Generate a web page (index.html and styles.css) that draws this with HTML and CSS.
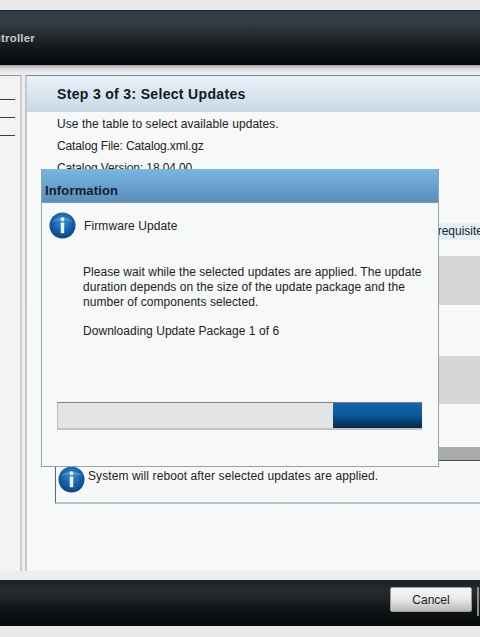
FILE: index.html
```html
<!DOCTYPE html>
<html lang="en">
<head>
<meta charset="utf-8">
<title>Select Updates</title>
<link rel="stylesheet" href="styles.css">
</head>
<body>
<svg class="defs" width="0" height="0" aria-hidden="true">
  <defs>
    <radialGradient id="orb" cx="50%" cy="35%" r="70%">
      <stop offset="0" stop-color="#3f8fd0"/>
      <stop offset="0.55" stop-color="#155fa8"/>
      <stop offset="1" stop-color="#0a3c78"/>
    </radialGradient>
    <symbol id="info" viewBox="0 0 28 28">
      <circle cx="14" cy="14" r="13.5" fill="url(#orb)"/>
      <path d="M3 11C7 4 21 4 25 11C20 8 8 8 3 11Z" fill="#6fb0e2" opacity=".45"/>
      <circle cx="14" cy="7.5" r="2" fill="#e6f1fa"/>
      <rect x="12.2" y="11" width="3.6" height="11" rx=".6" fill="#e6f1fa"/>
    </symbol>
  </defs>
</svg>
<div class="page">
  <header class="topbar"><div class="brand"><span>Controller</span></div></header>
  <div class="workspace">
    <aside class="sidebar">
      <div class="side-row"></div>
      <div class="side-row"></div>
      <div class="side-row"></div>
    </aside>
    <main class="panel">
      <h1 class="panel-title">Step 3 of 3: Select Updates</h1>
      <div class="intro">
        <p>Use the table to select available updates.</p>
        <p class="tight">Catalog File: Catalog.xml.gz</p>
        <p class="tight">Catalog Version: 18.04.00</p>
      </div>
      <div class="table">
        <div class="thead"><span>Prerequisite</span></div>
        <div class="row gray r1"></div>
        <div class="row r2"></div>
        <div class="row gray r3"></div>
        <div class="row r4"></div>
        <div class="scroll"></div>
      </div>
      <div class="notice">
        <svg class="notice-icon"><use href="#info"/></svg>
        <span>System will reboot after selected updates are applied.</span>
      </div>
    </main>
  </div>
  <footer class="footbar">
    <button class="cancel" type="button">Cancel</button>
    <span class="next-edge"></span>
  </footer>
  <div class="foot-strip"></div>

  <section class="dialog">
    <h2 class="dialog-title">Information</h2>
    <div class="dialog-head">
      <svg class="dialog-icon"><use href="#info"/></svg>
      <span>Firmware Update</span>
    </div>
    <div class="dialog-body">
      <p>Please wait while the selected updates are applied. The update duration depends on the size of the update package and the number of components selected.</p>
      <p class="status">Downloading Update Package 1 of 6</p>
    </div>
    <div class="progress"><div class="progress-fill"></div></div>
  </section>
</div>
</body>
</html>
```

FILE: styles.css
```css
* { box-sizing: border-box; }
html, body { margin: 0; padding: 0; }
body {
  width: 480px;
  height: 637px;
  overflow: hidden;
  background: #e9e9eb;
  font-family: "Liberation Sans", Arial, sans-serif;
  color: #222;
}
.defs { position: absolute; }
.page {
  position: relative;
  width: 480px;
  height: 637px;
  display: flex;
  flex-direction: column;
  padding-top: 10px;
}
.topbar {
  height: 55px;
  flex: none;
  background: linear-gradient(#2f3a42 0, #333e46 20%, #1c2227 55%, #0b0d0f 85%, #060708 100%);
  border-top: 1px solid #20262b;
  display: flex;
  align-items: center;
  padding-top: 0;
  padding-bottom: 1px;
}
.brand {
  width: 35px;
  height: 16px;
  overflow: hidden;
  display: flex;
  justify-content: flex-end;
  align-items: center;
  color: #c6cace;
  font-size: 11.5px;
  font-weight: bold;
  letter-spacing: .2px;
}
.brand span { flex: none; }
.workspace {
  flex: 1;
  display: flex;
  min-height: 0;
  padding: 10px 0 9px;
  background: linear-gradient(#a9a9ab 0, #dcdcde 4px, #ecedee 8px, #eeeeef 100%);
}
.sidebar {
  width: 22px;
  flex: none;
  background: #f3f3f3;
  border-top: 1px solid #8e9499;
  border-right: 2px solid #c9cccd;
  padding-top: 6px;
}
.side-row {
  height: 18px;
  margin-right: 5px;
  border-bottom: 1px solid #3a3a3a;
}
.panel {
  flex: 1;
  margin-left: 3px;
  background: #f7f8f8;
  border-top: 1px solid #80868b;
  border-left: 2px solid #c3c8c9;
  overflow: hidden;
}
.panel-title {
  margin: 0;
  height: 36px;
  padding: 9px 0 0 30px;
  font-size: 14px;
  line-height: 18px;
  letter-spacing: .33px;
  color: #15181b;
  background: linear-gradient(#eaf1f8, #c9d8e7);
}
.intro {
  padding: 1px 0 0 30px;
  font-size: 12px;
  letter-spacing: .07px;
}
.intro p { margin: 0; height: 22px; line-height: 22px; }
.intro .tight { letter-spacing: -.12px; }
.table {
  margin: 44px 0 0 28px;
  width: 425px;
}
.thead {
  height: 17px;
  background: #e3eff6;
  font-size: 12px;
  line-height: 17px;
  white-space: nowrap;
  overflow: hidden;
  display: flex;
  justify-content: flex-end;
}
.thead span { flex: none; margin-right: -3px; }
.row { background: #f8f8f8; }
.gray { background: #d6d6d6; }
.r1 { margin-top: 16px; height: 49px; }
.r2 { height: 51px; }
.r3 { height: 48px; }
.r4 { height: 43px; }
.scroll {
  height: 14px;
  background: #ababab;
  border-bottom: 1px solid #44525c;
}
.notice {
  margin: 6px 0 0 28px;
  width: 440px;
  height: 37px;
  display: flex;
  align-items: flex-start;
  gap: 3px;
  padding: 0 0 0 2px;
  border-left: 1px solid #556c7c;
  border-bottom: 2px solid #b3c4cc;
  font-size: 12px;
  letter-spacing: .1px;
  background: #f8f7f7;
}
.notice-icon { width: 27px; height: 27px; flex: none; margin-top: -1px; }
.notice span { line-height: 16px; padding-top: 1px; }
.footbar {
  height: 46px;
  flex: none;
  background: linear-gradient(#1a2025 0, #262c31 25%, #101416 65%, #07090a 100%);
  display: flex;
  align-items: flex-start;
  justify-content: flex-end;
  padding: 7px 1px 0 0;
  gap: 5px;
}
.cancel {
  width: 82px;
  height: 25px;
  margin: 0;
  padding: 0;
  border: 1px solid #9b9b9b;
  border-radius: 2px;
  background: linear-gradient(#f6f6f6, #ebebeb 45%, #b9b9b9);
  font-family: inherit;
  font-size: 12px;
  color: #222;
}
.next-edge {
  width: 2px;
  height: 29px;
  background: #8d8d8d;
}
.foot-strip { height: 11px; flex: none; background: #e9e9eb; }
.dialog {
  position: absolute;
  left: 41px;
  top: 169px;
  width: 398px;
  height: 298px;
  background: #f7f8f8;
  border: 1px solid #8fa5b2;
  border-top: 0;
}
.dialog-title {
  margin: 0;
  height: 34px;
  padding: 14px 0 0 3px;
  font-size: 13px;
  line-height: 16px;
  letter-spacing: .15px;
  color: #10202e;
  background: linear-gradient(#7ab6e2 0, #6aa4d0 45%, #5a8fb9 100%);
  border-bottom: 1px solid #7b9cb4;
}
.dialog-head {
  display: flex;
  align-items: center;
  gap: 8px;
  padding: 9px 0 0 7px;
  font-size: 12px;
  letter-spacing: .1px;
}
.dialog-icon { width: 27px; height: 27px; flex: none; }
.dialog-body {
  padding: 26px 8px 0 41px;
  font-size: 12px;
  line-height: 15px;
  letter-spacing: .04px;
}
.dialog-body p { margin: 0; }
.dialog-body .status { margin-top: 14px; }
.progress {
  position: absolute;
  left: 15px;
  top: 233px;
  width: 365px;
  height: 28px;
  display: flex;
  justify-content: flex-end;
  background: #e3e3e3;
  border-top: 1px solid #7d7d7d;
  border-bottom: 2px solid #c2c2c2;
  border-left: 1px solid #bdbdbd;
}
.progress-fill {
  width: 89px;
  background: linear-gradient(#1266ad 0, #0d5a9c 45%, #063761 85%, #042a4c 100%);
}
```
